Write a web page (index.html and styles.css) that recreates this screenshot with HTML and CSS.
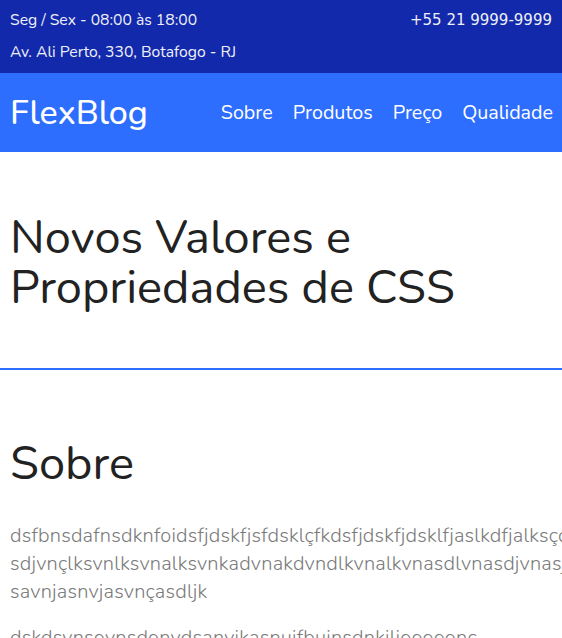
FILE: index.html
```html
<!DOCTYPE html>
<html lang="pt-BR">
<head>
<meta charset="utf-8">
<title>FlexBlog</title>
<link rel="stylesheet" href="styles.css">
</head>
<body>
<header class="header">
  <div class="topbar">
    <div class="topbar-info">
      <p class="topbar-text">Seg / Sex - 08:00 às 18:00</p>
      <p class="topbar-text">Av. Ali Perto, 330, Botafogo - RJ</p>
    </div>
    <p class="topbar-phone">+55 21 9999-9999</p>
  </div>
  <nav class="navbar">
    <span class="logo">FlexBlog</span>
    <ul class="menu">
      <li><a class="menu-link" href="#">Sobre</a></li>
      <li><a class="menu-link" href="#">Produtos</a></li>
      <li><a class="menu-link" href="#">Preço</a></li>
      <li><a class="menu-link" href="#">Qualidade</a></li>
    </ul>
  </nav>
</header>
<section class="intro">
  <h1 class="intro-title">Novos Valores e<br>Propriedades de CSS</h1>
</section>
<section class="about">
  <h2 class="about-title">Sobre</h2>
  <p class="about-text">dsfbnsdafnsdknfoidsfjdskfjsfdsklçfkdsfjdskfjdsklfjaslkdfjalksçdjfalksdjf sdjvnçlksvnlksvnalksvnkadvnakdvndlkvnalkvnasdlvnasdjvnasjvnasjdvn savnjasnvjasvnçasdljk</p>
  <p class="about-text">dskdsvnsovnsdonvdsanvikasnuifbuinsdnkiljooooonc</p>
</section>
</body>
</html>
```
FILE: styles.css
```css
* { box-sizing: border-box; }
html, body { margin: 0; padding: 0; }
body {
  font-family: "Nunito", "Lato", sans-serif;
  color: #222;
  background: #fff;
}
.topbar {
  background: #1329ab;
  color: #eef0fa;
  display: flex;
  justify-content: space-between;
  align-items: flex-start;
  padding: 4px 10px 5px;
  height: 73px;
}
.topbar-text {
  margin: 0;
  font-size: 15.7px;
  line-height: 32px;
}
.topbar-phone {
  margin: 0;
  font-family: "DejaVu Sans", sans-serif;
  font-size: 15px;
  line-height: 32px;
}
.navbar {
  background: #2d6eff;
  height: 79px;
  display: flex;
  align-items: center;
  justify-content: space-between;
  padding: 0 9px 0 10px;
}
.logo {
  color: #fff;
  font-size: 34px;
  font-weight: 500;
}
.menu {
  list-style: none;
  display: flex;
  gap: 20px;
  margin: 0;
  padding: 0;
}
.menu-link {
  color: #fff;
  text-decoration: none;
  font-size: 19.7px;
}
.intro {
  padding: 61px 10px 55px;
  border-bottom: 2px solid #2d6eff;
}
.intro-title {
  margin: 0;
  font-size: 47px;
  font-weight: 400;
  line-height: 50px;
}
.about {
  padding: 66px 10px 0;
}
.about-title {
  margin: 0 0 30px;
  font-size: 47px;
  font-weight: 400;
  line-height: 56px;
}
.about-text {
  margin: 0 0 18px;
  font-weight: 300;
  font-size: 20px;
  line-height: 28px;
  letter-spacing: 0.2px;
  color: #7a7a7a;
}
```
